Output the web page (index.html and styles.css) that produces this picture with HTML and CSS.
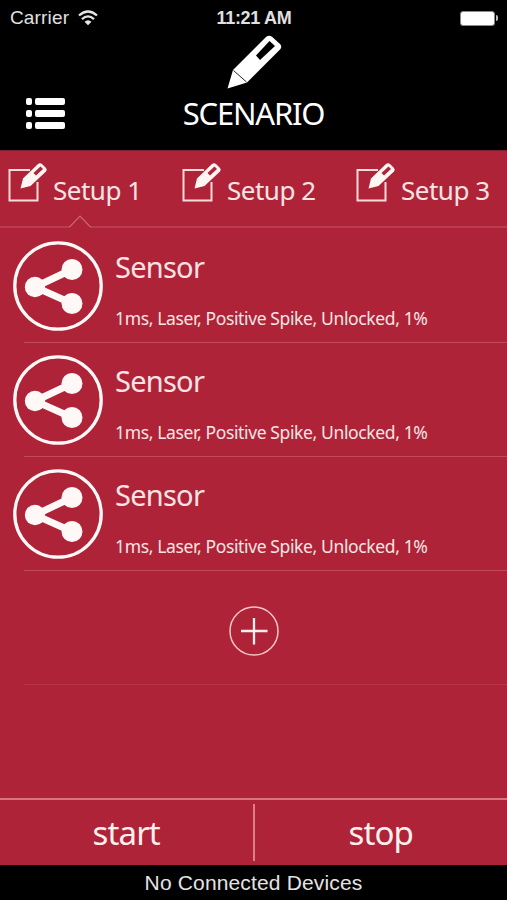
FILE: index.html
```
<!DOCTYPE html>
<html lang="en">
<head>
  <meta charset="UTF-8">
  <meta name="viewport" content="width=device-width, initial-scale=1.0">
  <title>Scenario</title>
  <link rel="stylesheet" href="styles.css">
</head>
<body>
  <!-- Shared icons -->
  <svg class="defs" width="0" height="0">
    <symbol id="edit" viewBox="0 0 40 42">
      <path d="M22 8H1.500v30.500h28V20" fill="none" stroke="#fbdcdc" stroke-width="2"/>
      <path d="M12.500 26.500L15 16.500L30 2Q32 0.500 34 2L38 6Q39.500 7.500 38 9.500L22.500 24Z" fill="#fff5f3"/>
      <path d="M25.500 11L32.500 4.500L35 7L28 13.500Z" fill="#ae2338"/>
    </symbol>
    <symbol id="share" viewBox="0 0 90 90">
      <circle cx="45" cy="45" r="43.200" fill="none" stroke="#fff8f6" stroke-width="3.300"/>
      <path d="M59 28.500L22 46L59 62.500" fill="none" stroke="#fff8f6" stroke-width="7"/>
      <circle cx="22" cy="46" r="10.200" fill="#fff8f6"/>
      <circle cx="59" cy="28.500" r="10.500" fill="#fff8f6"/>
      <circle cx="59" cy="62.500" r="10.500" fill="#fff8f6"/>
    </symbol>
  </svg>

  <div class="app">
    <header class="header">
      <div class="status">
        <div class="carrier">
          <span>Carrier</span>
          <svg width="20" height="16" viewBox="0 0 20 16">
            <path d="M1 5.500Q10-2.500 19 5.500M4 9.200Q10 3.500 16 9.200" fill="none" stroke="#e6e6e6" stroke-width="2.300"/>
            <path d="M6.500 11.800Q10 8.500 13.500 11.800L10 15.300Z" fill="#e6e6e6"/>
          </svg>
        </div>
        <div class="time">11:21 AM</div>
        <div class="battery"><span class="level"></span><span class="cap"></span></div>
      </div>
      <div class="title-bar">
        <div class="menu">
          <span></span><span></span>
          <span></span><span></span>
          <span></span><span></span>
        </div>
        <div class="title">
          <svg width="56" height="54" viewBox="0 0 56 54">
            <path d="M1.500 52.500L7 34L40 1Q43 -1.500 46 0.800L54 8Q56.500 10.500 54 13.500L21 46.500Z" fill="#fff"/>
            <path d="M30 19.500L43.500 5L49 10L34 24Z" fill="#000"/>
            <path d="M7.500 34.500L20.500 46" stroke="#222" stroke-width="1"/>
          </svg>
          <h1>SCENARIO</h1>
        </div>
      </div>
    </header>

    <nav class="tabs">
      <div class="tab"><svg width="40" height="42"><use href="#edit"/></svg><span>Setup 1</span></div>
      <div class="tab"><svg width="40" height="42"><use href="#edit"/></svg><span>Setup 2</span></div>
      <div class="tab"><svg width="40" height="42"><use href="#edit"/></svg><span>Setup 3</span></div>
      <svg class="notch" width="22" height="13" viewBox="0 0 22 13">
        <path d="M1 11.500L11 1L21 11.500V13H1Z" fill="#ae2338"/>
        <path d="M0.500 12L11 1L21.500 12" fill="none" stroke="#cf6472" stroke-width="1.200"/>
      </svg>
    </nav>

    <main class="list">
      <div class="row">
        <svg width="90" height="90"><use href="#share"/></svg>
        <div class="info">
          <div class="name">Sensor</div>
          <div class="details">1ms, Laser, Positive Spike, Unlocked, 1%</div>
        </div>
      </div>
      <div class="row">
        <svg width="90" height="90"><use href="#share"/></svg>
        <div class="info">
          <div class="name">Sensor</div>
          <div class="details">1ms, Laser, Positive Spike, Unlocked, 1%</div>
        </div>
      </div>
      <div class="row">
        <svg width="90" height="90"><use href="#share"/></svg>
        <div class="info">
          <div class="name">Sensor</div>
          <div class="details">1ms, Laser, Positive Spike, Unlocked, 1%</div>
        </div>
      </div>
      <div class="row add">
        <svg width="50" height="50" viewBox="0 0 50 50">
          <circle cx="25" cy="25" r="24" fill="none" stroke="#f6c4c6" stroke-width="1.500"/>
          <path d="M12 25H38.500M25 12V38.500" stroke="#fff0ef" stroke-width="2.300"/>
        </svg>
      </div>
    </main>

    <div class="actions">
      <div class="action start">start</div>
      <div class="divider"></div>
      <div class="action stop">stop</div>
    </div>
    <footer class="footer">No Connected Devices</footer>
  </div>
</body>
</html>
```
FILE: styles.css
```
body {
  margin: 0;
  background-color: #ae2338;
  color: #fbe3e3;
  font-family: "Noto Sans", sans-serif;
}
.defs {
  display: block;
}
.app {
  display: flex;
  flex-direction: column;
  height: 900px;
  overflow: hidden;
}
.header {
  height: 150px;
  background-color: #000;
  border-bottom: 1px solid #782032;
}
.status {
  display: grid;
  grid-template-columns: 1fr auto 1fr;
  align-items: center;
  height: 36px;
  padding: 0 9px 0 10px;
  font-family: "Liberation Sans", Arial, sans-serif;
  font-size: 19px;
  color: #e0e0e0;
}
.carrier {
  display: flex;
  align-items: center;
  gap: 9px;
  letter-spacing: 0.150px;
}
.time {
  font-size: 18px;
  font-weight: bold;
  letter-spacing: -0.300px;
}
.battery {
  display: flex;
  align-items: center;
  justify-content: flex-end;
  gap: 1px;
}
.level {
  width: 33px;
  height: 13px;
  background-color: #fff;
  border: 1.500px solid #8a8a8a;
  border-radius: 3px;
}
.cap {
  width: 2px;
  height: 6px;
  background-color: #bbb;
  border-radius: 0 2px 2px 0;
}
.title-bar {
  display: grid;
  grid-template-columns: 1fr auto 1fr;
  height: 114px;
}
.menu {
  display: grid;
  grid-template-columns: 6px 30px;
  grid-auto-rows: 7px;
  gap: 5px 2.500px;
  align-self: end;
  margin: 0 0 21px 26px;
}
.menu span {
  background-color: #fff;
  border-radius: 2px;
}
.title {
  display: flex;
  flex-direction: column;
  align-items: center;
}
.title svg {
  overflow: visible;
}
h1 {
  margin: 2px 0 0;
  font-size: 31px;
  font-weight: normal;
  line-height: 42px;
  letter-spacing: -1.200px;
  color: #fff;
}
.tabs {
  position: relative;
  display: grid;
  grid-template-columns: 174px 174px 1fr;
  height: 75px;
  border-bottom: 2px solid #b93d50;
}
.tab {
  display: flex;
  gap: 5px;
  padding: 11px 0 0 8px;
  white-space: nowrap;
}
.tab span {
  margin-top: 8px;
  font-size: 26px;
  line-height: 40px;
  letter-spacing: -0.500px;
}
.notch {
  position: absolute;
  left: 69px;
  bottom: -2px;
}
.list {
  flex: 1;
}
.row {
  display: flex;
  gap: 12px;
  height: 113px;
  margin-left: 24px;
  border-bottom: 1px solid #c04a5b;
}
.row:first-child {
  padding-top: 1px;
}
.row > svg {
  flex: none;
  margin: 12px 0 0 -11px;
}
.info {
  padding-top: 18px;
  white-space: nowrap;
}
.name {
  font-size: 29px;
  line-height: 40px;
  letter-spacing: -0.750px;
}
.details {
  margin-top: 19px;
  font-size: 17.500px;
  line-height: 24px;
  letter-spacing: -0.370px;
}
.add {
  justify-content: center;
  border-color: #b83548;
}
.add > svg {
  margin: 35px 0 0 -24px;
}
.actions {
  display: flex;
  align-items: center;
  height: 65px;
  border-top: 2px solid #d87581;
}
.action {
  flex: 1;
  padding-top: 1px;
  text-align: center;
  font-size: 33px;
  line-height: 44px;
  letter-spacing: -0.900px;
  color: #fff0ef;
}
.divider {
  width: 2px;
  height: 57px;
  background-color: #dc7f89;
}
.footer {
  height: 35px;
  background-color: #000;
  color: #e4e4e4;
  font-family: "Liberation Sans", Arial, sans-serif;
  font-size: 21px;
  line-height: 36px;
  letter-spacing: 0.150px;
  text-align: center;
}
```
